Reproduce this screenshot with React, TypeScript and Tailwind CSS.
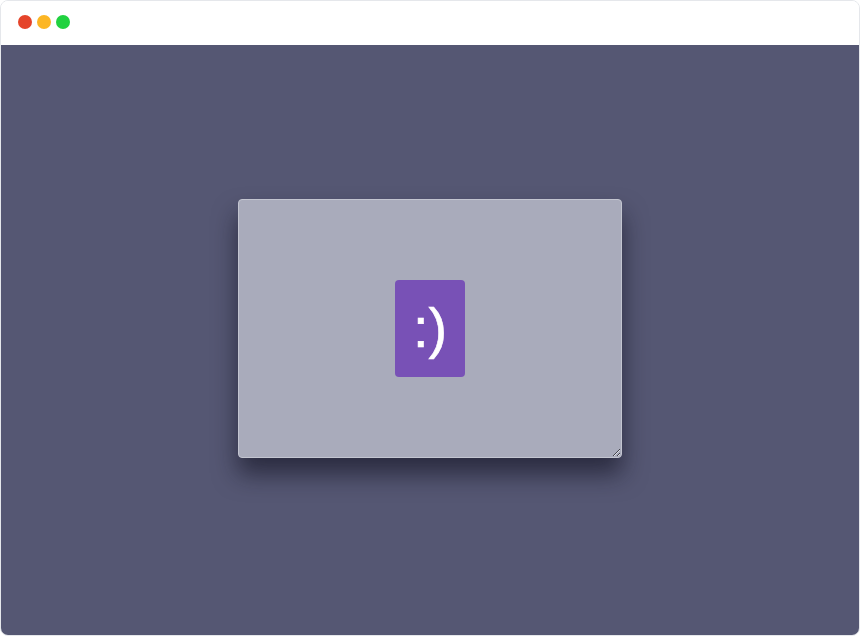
import React from 'react';

const App: React.FC = () => {
    return (
        <div className="w-[860px] h-[636px] bg-white" style={{ fontFamily: '"Liberation Sans", Arial, sans-serif' }}>
            <div className="w-full h-full flex flex-col rounded-lg border border-gray-200 overflow-hidden">
                <div className="h-[44px] shrink-0 bg-white flex items-center pl-[17px] pb-[2px] gap-[5px]">
                    <span className="w-[14px] h-[14px] rounded-full bg-[#e5442a]" />
                    <span className="w-[14px] h-[14px] rounded-full bg-[#fcb624]" />
                    <span className="w-[14px] h-[14px] rounded-full bg-[#21d240]" />
                </div>
                <div className="flex-1 bg-[#555773] flex justify-center items-start pt-[154px]">
                    <div className="w-[384px] h-[259px] rounded bg-[#a9abbb] border border-[#c3c5d0] shadow-[0_16px_24px_rgba(15,15,30,0.6)] flex items-center justify-center resize overflow-auto">
                        <div className="w-[70px] h-[97px] rounded bg-[#7851b6] flex items-center justify-center text-white text-[56px] leading-none pb-[2px] [-webkit-text-stroke:0.6px_white]">
                            :)
                        </div>
                    </div>
                </div>
            </div>
        </div>
    );
};

export default App;
